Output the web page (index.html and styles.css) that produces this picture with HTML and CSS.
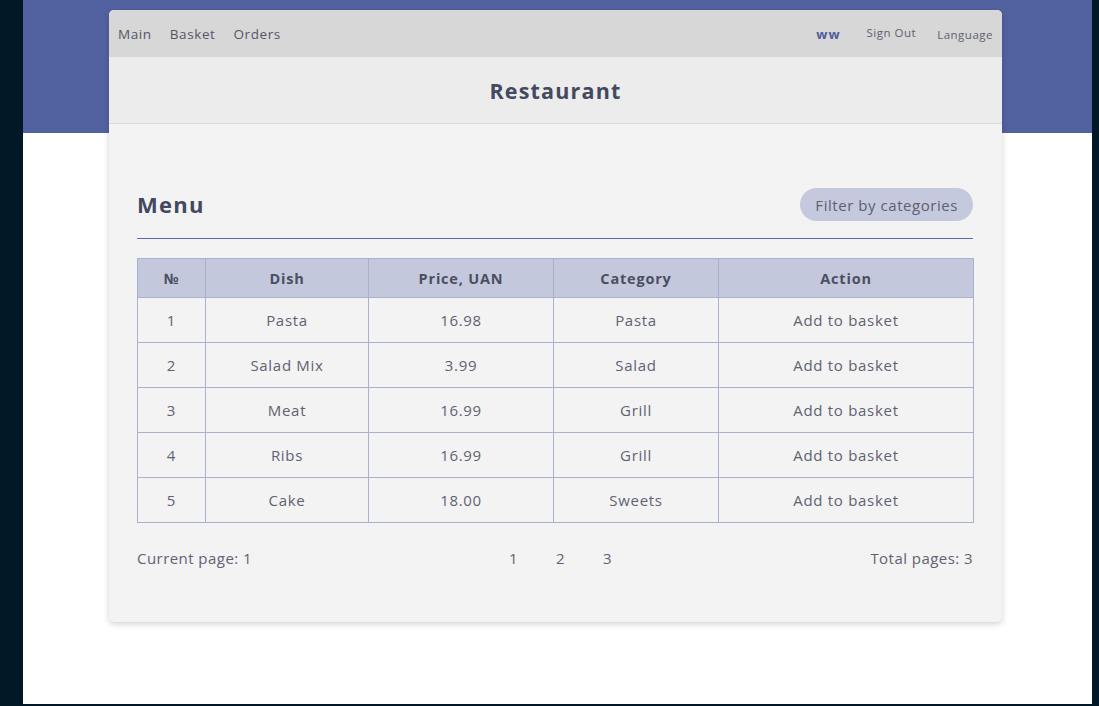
FILE: index.html
```html
<!DOCTYPE html>
<html lang="en">
<head>
<meta charset="utf-8">
<title>Restaurant</title>
<link rel="stylesheet" href="styles.css">
</head>
<body>
<div class="screen">
  <div class="card">
    <nav class="nav">
      <div class="nav-left">
        <a class="nav-link">Main</a>
        <a class="nav-link">Basket</a>
        <a class="nav-link">Orders</a>
      </div>
      <div class="nav-right">
        <span class="user">ww</span>
        <a class="nav-small">Sign Out</a>
        <a class="nav-small lang">Language</a>
      </div>
    </nav>
    <header class="header">
      <h1 class="title">Restaurant</h1>
    </header>
    <main class="content">
      <div class="menu-head">
        <h2 class="menu-title">Menu</h2>
        <button class="filter">Filter by categories</button>
      </div>
      <table class="menu-table">
        <colgroup>
          <col class="c1"><col class="c2"><col class="c3"><col class="c4"><col class="c5">
        </colgroup>
        <thead>
          <tr><th>№</th><th>Dish</th><th>Price, UAN</th><th>Category</th><th>Action</th></tr>
        </thead>
        <tbody>
          <tr><td>1</td><td>Pasta</td><td>16.98</td><td>Pasta</td><td>Add to basket</td></tr>
          <tr><td>2</td><td>Salad Mix</td><td>3.99</td><td>Salad</td><td>Add to basket</td></tr>
          <tr><td>3</td><td>Meat</td><td>16.99</td><td>Grill</td><td>Add to basket</td></tr>
          <tr><td>4</td><td>Ribs</td><td>16.99</td><td>Grill</td><td>Add to basket</td></tr>
          <tr><td>5</td><td>Cake</td><td>18.00</td><td>Sweets</td><td>Add to basket</td></tr>
        </tbody>
      </table>
      <div class="pager-row">
        <span class="current">Current page: 1</span>
        <div class="pager">
          <a class="page">1</a>
          <a class="page">2</a>
          <a class="page">3</a>
        </div>
        <span class="total">Total pages: 3</span>
      </div>
    </main>
  </div>
</div>
</body>
</html>
```

FILE: styles.css
```css
* { box-sizing: border-box; }
html, body { margin: 0; padding: 0; }
body {
  background: #021826;
  font-family: "Open Sans", "Noto Sans", sans-serif;
  color: #5f6170;
}
.screen {
  width: 1069px;
  height: 704px;
  margin-left: 23px;
  background: linear-gradient(to bottom, #5262a0 0, #5262a0 133px, #ffffff 133px);
  padding-top: 10px;
}
.card {
  width: 893px;
  height: 612px;
  margin-left: 86px;
  background: #f3f3f3;
  border-radius: 5px;
  overflow: hidden;
  box-shadow: 0 2px 6px rgba(0,0,0,0.18);
}
.nav {
  height: 47px;
  background: #d7d7d7;
  display: flex;
  align-items: center;
  justify-content: space-between;
  padding: 0 9px 0 9px;
}
.nav-left { display: flex; gap: 18px; }
.nav-link {
  font-size: 13.5px;
  color: #53566a;
  letter-spacing: 0.6px;
}
.nav-right { display: flex; align-items: center; }
.user {
  font-size: 13px;
  font-weight: 700;
  color: #4e5d9c;
  letter-spacing: 1px;
  margin-right: 26px;
}
.nav-small {
  font-size: 11.5px;
  color: #5e6070;
  letter-spacing: 0.5px;
  margin-right: 21px;
  margin-top: -2px;
}
.nav-small.lang { margin-right: 0; margin-top: 1px; }
.header {
  height: 67px;
  background: #ececec;
  border-bottom: 1px solid #dcdcdc;
  display: flex;
  align-items: center;
  justify-content: center;
}
.title {
  margin: 0;
  font-size: 21.5px;
  font-weight: 700;
  color: #43495e;
  letter-spacing: 1.2px;
}
.content {
  padding: 64px 29px 0 28px;
}
.menu-head {
  display: flex;
  align-items: center;
  justify-content: space-between;
  padding-bottom: 17px;
  border-bottom: 1px solid #5a6bb4;
}
.menu-title {
  margin: 0 0 2px 0;
  font-size: 22px;
  font-weight: 700;
  color: #43495e;
  letter-spacing: 1.3px;
}
.filter {
  height: 33px;
  padding: 0 15px;
  border: none;
  border-radius: 17px;
  background: #c5c9dd;
  font-family: inherit;
  font-size: 15px;
  color: #5d6072;
  letter-spacing: 0.55px;
}
.menu-table {
  margin-top: 19px;
  width: 836px;
  border-collapse: collapse;
  table-layout: fixed;
  font-size: 15px;
}
.c1 { width: 68px; }
.c2 { width: 163px; }
.c3 { width: 185px; }
.c4 { width: 165px; }
.c5 { width: 255px; }
.menu-table th, .menu-table td {
  border: 1px solid #aab0d0;
  text-align: center;
  padding: 0;
}
.menu-table th {
  height: 39px;
  background: #c4c8dc;
  font-weight: 700;
  color: #4b4f61;
  font-size: 14.5px;
  letter-spacing: 0.8px;
}
.menu-table td {
  height: 45px;
  color: #606272;
  letter-spacing: 0.7px;
}
.pager-row {
  margin-top: 25px;
  display: grid;
  grid-template-columns: 1fr auto 1fr;
  align-items: center;
  font-size: 15px;
  color: #606272;
  letter-spacing: 0.45px;
}
.pager {
  display: flex;
  gap: 38px;
  padding-left: 11px;
}
.total { justify-self: end; }
```
